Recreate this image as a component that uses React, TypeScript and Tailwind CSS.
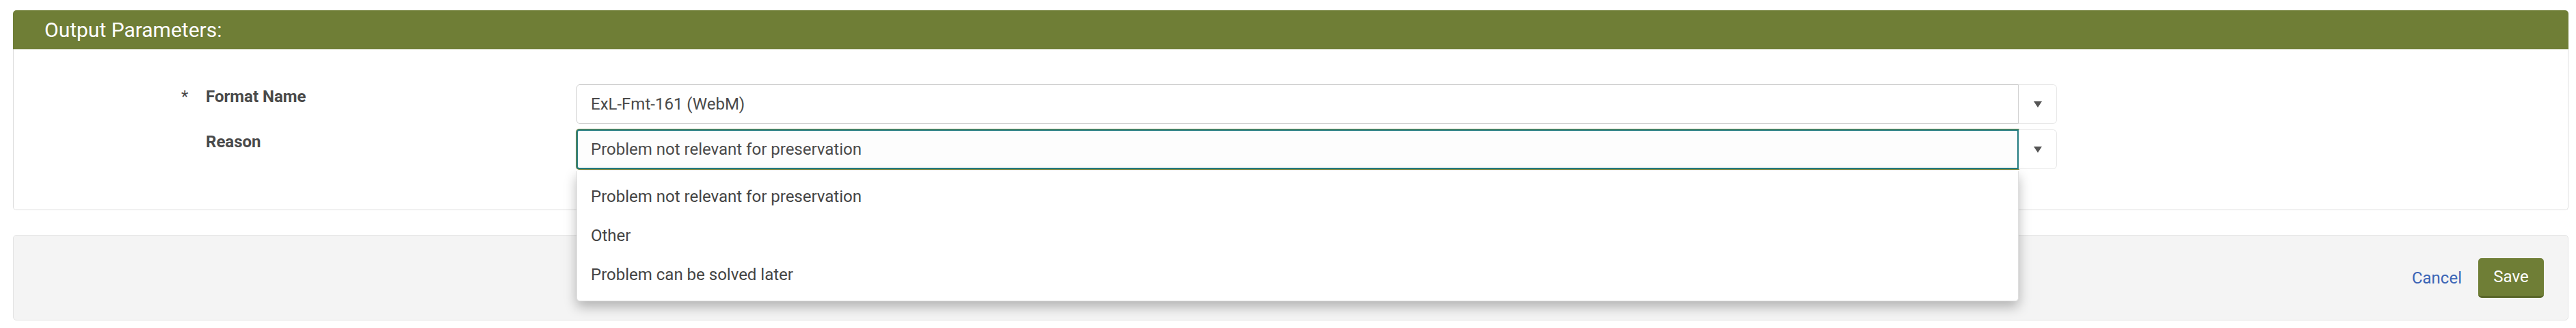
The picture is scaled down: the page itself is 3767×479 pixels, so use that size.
import React from "react";

function Caret() {
  return (
    <svg width="12" height="9" viewBox="0 0 12 9" className="block">
      <path d="M0 0 H12 L6 9 Z" fill="#555555" />
    </svg>
  );
}

export default function App() {
  return (
    <div className="relative w-full h-[479px] bg-white pt-[15px] pl-[19px] pr-[11px] font-['Roboto','Liberation_Sans',sans-serif] text-[#444444]">
      {/* Card */}
      <div>
        <div className="h-[57px] bg-[#6f7e36] rounded-t-[5px] pl-[46px] flex items-center text-white text-[30px] leading-none">
          Output Parameters:
        </div>
        <div className="h-[235px] border-x border-b border-[#dedede] rounded-b-[5px] pt-[51px] flex flex-col gap-[8px]">
          {/* Row 1 */}
          <div className="flex">
            <div className="w-[823px] shrink-0 flex pl-[245px] pt-[4px] text-[24px] leading-[28px] text-[#4a4a4a]">
              <span className="w-[36px]">*</span>
              <span className="font-bold">Format Name</span>
            </div>
            <div className="flex">
              <div className="w-[2109px] h-[58px] border border-[#cfcfcf] rounded-l-[5px] bg-white flex items-center pl-[20px] text-[24px] text-[#4a4a4a]">
                ExL-Fmt-161 (WebM)
              </div>
              <div className="w-[56px] h-[58px] border border-l-0 border-[#e8e8e8] rounded-r-[6px] bg-white flex items-center justify-center">
                <Caret />
              </div>
            </div>
          </div>
          {/* Row 2 */}
          <div className="flex">
            <div className="w-[823px] shrink-0 flex pl-[245px] pt-[4px] text-[24px] leading-[28px] text-[#4a4a4a]">
              <span className="w-[36px]"></span>
              <span className="font-bold">Reason</span>
            </div>
            <div className="flex">
              <div className="w-[2109px] h-[58px] border-2 border-[#227b80] ring-1 ring-[#7d8a3c] rounded-l-[4px] bg-[#fdfdfd] flex items-center pl-[19px] text-[24px] text-[#4a4a4a]">
                Problem not relevant for preservation
              </div>
              <div className="w-[56px] h-[58px] border border-l-0 border-[#e8e8e8] rounded-r-[6px] bg-white flex items-center justify-center">
                <Caret />
              </div>
            </div>
          </div>
        </div>
      </div>

      {/* Footer */}
      <div className="mt-[36px] h-[125px] rounded-[5px] bg-[#f4f4f4] border border-[#e4e4e4] flex items-center justify-end pr-[35px] gap-[24px]">
        <span className="text-[24px] text-[#3b65b6]">Cancel</span>
        <button className="w-[96px] h-[58px] rounded-[5px] bg-[#6f7e36] border-b-[3px] border-[#586628] text-white text-[24px] flex items-center justify-center">
          Save
        </button>
      </div>

      {/* Dropdown list */}
      <div className="absolute left-[843px] top-[250px] w-[2109px] h-[190px] bg-white border-x border-b border-[#e0e0e0] rounded-b-[5px] shadow-[0_8px_18px_rgba(0,0,0,0.28)] py-[8px] flex flex-col">
        {["Problem not relevant for preservation", "Other", "Problem can be solved later"].map((t) => (
          <div key={t} className="h-[57px] flex items-center pl-[20px] text-[24px] text-[#444444]">
            {t}
          </div>
        ))}
      </div>
    </div>
  );
}
